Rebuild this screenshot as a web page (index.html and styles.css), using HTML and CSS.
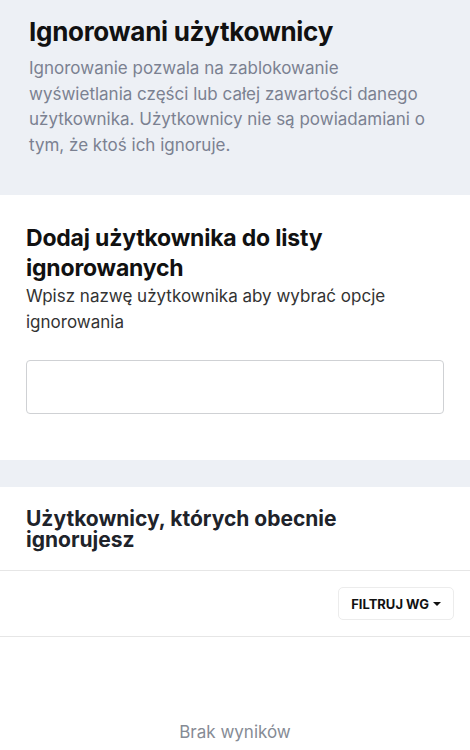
FILE: index.html
```html
<!DOCTYPE html>
<html lang="pl">
<head>
    <meta charset="UTF-8">
    <meta name="viewport" content="width=device-width, initial-scale=1.0">
    <title>Ignorowani użytkownicy</title>
    <link rel="stylesheet" href="styles.css">
</head>
<body>
    <header class="page-header">
        <h1>Ignorowani użytkownicy</h1>
        <p>Ignorowanie pozwala na zablokowanie wyświetlania części lub całej zawartości danego użytkownika. Użytkownicy nie są powiadamiani o tym, że ktoś ich ignoruje.</p>
    </header>

    <section class="box add-box">
        <h2>Dodaj użytkownika do listy ignorowanych</h2>
        <p>Wpisz nazwę użytkownika aby wybrać opcje ignorowania</p>
        <input type="text" class="user-input">
    </section>

    <section class="box list-box">
        <h3>Użytkownicy, których obecnie ignorujesz</h3>
        <div class="toolbar">
            <button class="filter-button">FILTRUJ WG <span class="caret"></span></button>
        </div>
        <div class="empty">Brak wyników</div>
    </section>
</body>
</html>
```

FILE: styles.css
```css
body {
    font-family: Inter, "Noto Sans", sans-serif;
    margin: 0;
    background-color: #edf0f5;
    color: #111;
}

.page-header {
    padding: 15px 29px 37px;
}

.page-header h1 {
    margin: 0;
    font-size: 26px;
    font-weight: 700;
    line-height: 34px;
    letter-spacing: -0.3px;
}

.page-header p {
    margin: 7px 0 0;
    font-size: 17px;
    line-height: 25.5px;
    color: #7b8191;
}

.box {
    background-color: #fff;
}

.add-box {
    padding: 28px 26px 46px;
    margin-bottom: 27px;
}

.add-box h2 {
    margin: 0;
    font-size: 23px;
    font-weight: 700;
    line-height: 30px;
    letter-spacing: -0.2px;
}

.add-box p {
    margin: 0;
    font-size: 17px;
    line-height: 26px;
    color: #333;
}

.user-input {
    display: block;
    box-sizing: border-box;
    width: 100%;
    height: 54px;
    margin-top: 25px;
    border: 1px solid #cfd1d4;
    border-radius: 4px;
}

.list-box h3 {
    margin: 0;
    padding: 21px 26px 20px;
    font-size: 21px;
    font-weight: 700;
    line-height: 21px;
    color: #20232a;
    border-bottom: 1px solid #e6e6e6;
}

.toolbar {
    display: flex;
    justify-content: flex-end;
    padding: 16px 16px 16px;
    border-bottom: 1px solid #e6e6e6;
}

.filter-button {
    font-family: Inter, sans-serif;
    font-size: 13px;
    font-weight: 700;
    color: #111;
    background: #fff;
    border: 1px solid #ececec;
    border-radius: 5px;
    padding: 0 12px;
    height: 33px;
    display: flex;
    align-items: center;
    gap: 4px;
}

.caret {
    width: 0;
    height: 0;
    border-left: 4px solid transparent;
    border-right: 4px solid transparent;
    border-top: 4px solid #111;
}

.empty {
    text-align: center;
    padding: 85px 0 40px;
    font-size: 17px;
    line-height: 20px;
    color: #868b95;
}
```
